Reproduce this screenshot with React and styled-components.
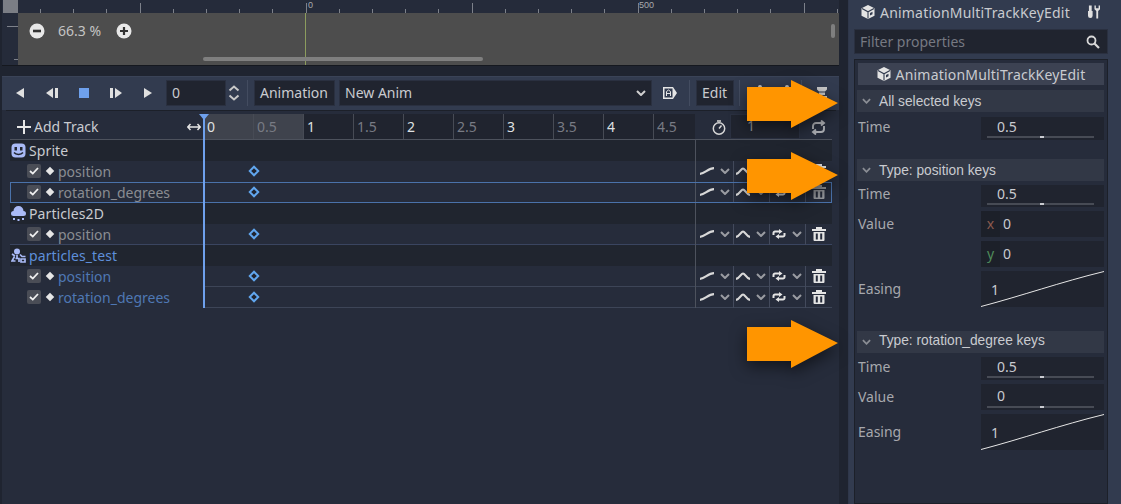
import React from 'react'
import styled, { createGlobalStyle } from 'styled-components'

const GlobalStyle = createGlobalStyle`
  html, body {
    margin: 0;
    padding: 0;
    background: #1f2430;
  }
  * {
    box-sizing: border-box;
  }
`

const Page = styled.div`
  position: relative;
  width: 1121px;
  height: 504px;
  overflow: hidden;
  display: flex;
  background: #1f2430;
  color: #c9cbd0;
  font-family: "Noto Sans", sans-serif;
  font-size: 14px;
`

const LeftColumn = styled.div`
  width: 837px;
  margin-left: 2px;
  display: flex;
  flex-direction: column;
  gap: 10px;
`

const Viewport = styled.div`
  position: relative;
  height: 66px;
  display: grid;
  grid-template-columns: 15px 1fr;
  grid-template-rows: 13px 1fr;
  padding-left: 1px;
  border-bottom: 1px solid #15181f;
  background: #252b3a;
`

const RulerCorner = styled.div`
  background: #7b7e85;
`

const HRuler = styled.div`
  position: relative;
  background: #252b3a;
`

const VRuler = styled.div`
  position: relative;
  background: #252b3a;
`

const Canvas = styled.div`
  background: #4d4d4d;
  display: flex;
  align-items: flex-start;
  padding: 9px 0 0 11px;
  gap: 12px;
  color: #c4c4c4;
`

const Tick = styled.span`
  position: absolute;
  bottom: 0;
  width: 1px;
  left: ${p => p.$x}px;
  height: ${p => (p.$major ? 10 : 4)}px;
  background: #7d818a;
`

const VTick = styled.span`
  position: absolute;
  right: 0;
  height: 1px;
  width: ${p => p.$w}px;
  top: ${p => p.$y}px;
  background: #7d818a;
`

const RulerLabel = styled.span`
  position: absolute;
  top: 0;
  left: ${p => p.$x}px;
  font-family: "Liberation Sans", sans-serif;
  font-size: 9px;
  line-height: 11px;
  color: #a7a9ae;
`

const ZoomButton = styled.svg`
  width: 16px;
  height: 16px;
  flex: none;
  margin-top: 1px;
`

const ZoomText = styled.span`
  width: 46px;
  margin-left: 1px;
  line-height: 18px;
  font-size: 14px;
`

const OriginLine = styled.span`
  position: absolute;
  left: 303px;
  top: 13px;
  bottom: 0;
  width: 1px;
  background: #8c9c5e;
`

const HScroll = styled.span`
  position: absolute;
  left: 201px;
  top: 57px;
  width: 280px;
  height: 4px;
  border-radius: 2px;
  background: #7f7f7f;
`

const VScroll = styled.span`
  position: absolute;
  left: 829px;
  top: 24px;
  width: 4px;
  height: 14px;
  border-radius: 2px;
  background: #7f7f7f;
`

const AnimPanel = styled.div`
  flex: 1;
  background: #262c3b;
  border-top: 1px solid #3a4357;
  display: flex;
  flex-direction: column;
`

const Toolbar = styled.div`
  height: 33px;
  padding-top: 3px;
  display: flex;
  align-items: flex-start;
  background: #323b4f;
`

const ToolIcon = styled.svg`
  width: 16px;
  height: 16px;
  margin: 5px 0 0 ${p => p.$ml || 0}px;
  flex: none;
`

const Field = styled.div`
  height: 26px;
  display: flex;
  align-items: center;
  flex: none;
  width: ${p => p.$w}px;
  margin-left: ${p => p.$ml || 0}px;
  padding: 0 5px;
  background: #20242f;
  border: 1px solid #2a3040;
  color: #c9cbd0;
  line-height: 24px;
`

const ToolSep = styled.span`
  width: 1px;
  height: 26px;
  flex: none;
  margin: 0 6px 0 ${p => p.$ml || 6}px;
  background: #434c60;
`

const TrackEditor = styled.div`
  position: relative;
  margin: 0 3px 0 4px;
  flex: 1;
  background: #262c3b;
  border-top: 1px solid #1c2029;
  padding-top: 3px;
`

const HeaderRow = styled.div`
  height: 26px;
  display: flex;
  border-bottom: 1px solid #4d525d;
  margin: 0 4px;
`

const AddTrack = styled.div`
  width: 194px;
  padding: 0 3px 0 7px;
  display: flex;
  align-items: center;
  gap: 3px;
  color: #c9cbd0;
`

const Timeline = styled.div`
  width: 491px;
  display: flex;
  background: #20242f;
`

const TimeCell = styled.div`
  width: ${p => p.$w}px;
  flex: none;
  padding-left: 3px;
  line-height: 25px;
  border-left: ${p => (p.$first ? 'none' : '1px solid #474b55')};
  color: ${p => (p.$major ? '#dfe0e2' : '#787b84')};
  background: ${p => (p.$active ? '#3f434d' : 'transparent')};
  font-size: 14px;
`

const HeaderActions = styled.div`
  width: 137px;
  display: flex;
  align-items: flex-start;
  position: relative;
`

const LengthField = styled.div`
  position: absolute;
  left: 35px;
  top: 0;
  width: 70px;
  height: 25px;
  background: #20242f;
  border: 1px solid #2a3040;
  padding-left: 16px;
  line-height: 22px;
  color: #8e9096;
`

const Row = styled.div`
  height: 21px;
  display: flex;
  align-items: center;
  position: relative;
  background: ${p => (p.$group ? '#20252f' : 'transparent')};
  margin: 0 4px;
  box-shadow: ${p => (p.$line === 'full' ? 'inset 0 -1px 0 #3a4560' : 'none')};
`

const SelectedOutline = styled.span`
  position: absolute;
  left: 0;
  right: 0;
  top: 0;
  bottom: 0;
  border: 1px solid #4a72aa;
  pointer-events: none;
`

const NameCell = styled.div`
  width: 194px;
  height: 100%;
  flex: none;
  display: flex;
  align-items: center;
  padding: 0 0 1px ${p => (p.$group ? 1 : 17)}px;
  gap: ${p => (p.$group ? 3 : 0)}px;
  white-space: nowrap;
`

const TrackLabel = styled.span`
  color: ${p => (p.$scene ? '#4f78b4' : '#8a8c92')};
`

const GroupLabel = styled.span`
  letter-spacing: 0.1px;
  color: ${p => (p.$scene ? '#5e8fda' : '#c9cbd0')};
`

const CheckBox = styled.span`
  width: 14px;
  height: 14px;
  margin-right: 3px;
  display: flex;
  align-items: center;
  justify-content: center;
  background: #4a4d56;
  border-radius: 2px;
  flex: none;
`

const SmallDiamond = styled.span`
  width: 6px;
  height: 6px;
  margin: 0 5px 0 3px;
  flex: none;
  background: #e6e6e6;
  transform: rotate(45deg);
`

const KeyLane = styled.div`
  position: relative;
  width: 492px;
  height: 100%;
  flex: none;
  border-right: 1px solid #4d525d;
  box-shadow: ${p => (p.$line ? 'inset 0 -1px 0 #3d4557' : 'none')};
`

const Key = styled.span`
  position: absolute;
  left: 46px;
  top: 6px;
  width: 8px;
  height: 8px;
  transform: rotate(45deg);
  background: #20242f;
  border: 2px solid #61a6ee;
`

const ActionCell = styled.div`
  width: 136px;
  display: flex;
  height: 100%;
  flex: none;
  box-shadow: ${p => (p.$line ? 'inset 0 -1px 0 #3d4557' : 'none')};
`

const Action = styled.div`
  width: ${p => p.$w}px;
  height: 100%;
  display: flex;
  align-items: center;
  justify-content: space-between;
  padding: 0 3px 1px ${p => p.$pl}px;
  border-left: ${p => (p.$bar ? '1px solid #434a5c' : 'none')};
`

const Playhead = styled.span`
  position: absolute;
  left: 197px;
  top: 3px;
  height: 194px;
  width: 2px;
  background: #6ea0ec;
`

const PlayheadTop = styled.svg`
  position: absolute;
  left: 193px;
  top: 3px;
  width: 10px;
  height: 6px;
`

const Inspector = styled.div`
  width: 273px;
  margin-left: 9px;
  padding: 0 13px 0 5px;
  border-left: 1px solid #2f374a;
  display: flex;
  flex-direction: column;
  background: #323b4f;
`

const InspectorHead = styled.div`
  height: 29px;
  padding: 0 0 5px 7px;
  display: flex;
  align-items: center;
  gap: 5px;
  color: #c9cbd0;
`

const ClassName = styled.span`
  letter-spacing: 0.2px;
`

const HeadGrow = styled.span`
  flex: 1;
`

const FilterBox = styled.div`
  height: 25px;
  display: flex;
  align-items: center;
  justify-content: space-between;
  padding: 0 7px 0 5px;
  background: #20242f;
  border: 1px solid #2a3040;
  color: #767982;
`

const InspectorBody = styled.div`
  flex: 1;
  margin-top: 5px;
  padding: 3px 3px 0 3px;
  background: #262c3b;
  border: 1px solid #1c2029;
`

const ClassButton = styled.div`
  height: 22px;
  display: flex;
  align-items: center;
  justify-content: center;
  gap: 5px;
  background: #3c4252;
  color: #c9cbd0;
`

const Section = styled.div`
  margin-top: ${p => p.$mt}px;
`

const SectionHead = styled.div`
  height: 22px;
  margin-left: -1px;
  display: flex;
  align-items: center;
  gap: 8px;
  padding-left: 5px;
  background: #323846;
  font-family: "Liberation Sans", sans-serif;
  font-size: 13.75px;
  color: #c9cbd0;
`

const SectionTitle = styled.span`
  margin-bottom: ${p => (p.$lift ? 4 : 0)}px;
`

const Prop = styled.div`
  display: flex;
  margin-top: ${p => p.$mt || 4}px;
`

const PropLabel = styled.div`
  width: 123px;
  flex: none;
  line-height: ${p => p.$lh || 20}px;
  color: #a6a8ad;
`

const PropValue = styled.div`
  flex: 1;
  display: flex;
  flex-direction: column;
  gap: 4px;
`

const SliderBox = styled.div`
  position: relative;
  height: ${p => p.$h}px;
  background: #20242f;
  padding-left: 16px;
  line-height: ${p => (p.$h === 26 ? 24 : p.$h === 22 ? 18 : 20)}px;
  color: #c9cbd0;
`

const SliderTrack = styled.span`
  position: absolute;
  left: 6px;
  right: 10px;
  bottom: 2px;
  height: 2px;
  background: #474b55;
`

const SliderGrabber = styled.span`
  position: absolute;
  left: 53px;
  top: 0;
  width: 4px;
  height: 2px;
  background: #c9cbd0;
`

const AxisRow = styled.div`
  display: flex;
  height: 26px;
  background: #20242f;
  line-height: 25px;
  color: #c9cbd0;
`

const AxisTag = styled.span`
  width: 19px;
  margin-right: 3px;
  text-align: center;
  background: #1c2029;
  color: ${p => p.$color};
`

const EasingBox = styled.div`
  position: relative;
  height: 36px;
  background: #20242f;
  padding: 9px 0 0 10px;
  line-height: 20px;
`

const EasingCurve = styled.svg`
  position: absolute;
  left: 0;
  top: 0;
  width: 123px;
  height: 36px;
`

const ArrowMark = styled.svg`
  position: absolute;
  left: 747px;
  top: ${p => p.$y}px;
  width: 91px;
  height: 48px;
  overflow: visible;
  filter: drop-shadow(0 5px 8px rgba(0, 0, 0, 0.55));
`

const ticks = []
for (let i = 0; i < 25; i++) ticks.push(22 + i * 33.2)

const tracks = [
  { group: 'Sprite', icon: 'sprite' },
  { name: 'position' },
  { name: 'rotation_degrees', selected: true },
  { group: 'Particles2D', icon: 'particles' },
  { name: 'position', line: 'full' },
  { group: 'particles_test', icon: 'scene', scene: true },
  { name: 'position', scene: true, line: 'lane' },
  { name: 'rotation_degrees', scene: true, line: 'lane' },
]

const times = ['0', '0.5', '1', '1.5', '2', '2.5', '3', '3.5', '4', '4.5']

function Cube() {
  return (
    <svg width="14" height="14" viewBox="0 0 14 14" style={{ flex: 'none' }}>
      <path d="M7 0 13.500 3.300V10.700L7 14 .5 10.700V3.300Z" fill="#e4e4e4" />
      <path d="M1 3.600 7 6.800 13 3.600M7 6.800V13.500" fill="none" stroke="#323b4f" strokeWidth="1.100" />
      <path d="M9 8V10.500L11.500 9.200V6.700Z" fill="#323b4f" />
    </svg>
  )
}

function Chevron({ color = '#9a9ca2', w = 10 }) {
  return (
    <svg width={w} height="6" viewBox="0 0 10 6" style={{ flex: 'none' }}>
      <path d="M1 1 5 5 9 1" fill="none" stroke={color} strokeWidth="2" />
    </svg>
  )
}

function NodeIcon({ type }) {
  if (type === 'sprite') {
    return (
      <svg width="15" height="15" viewBox="0 0 15 15" style={{ flex: 'none' }}>
        <rect x=".5" y=".5" width="14" height="14" rx="4" fill="#a9baf6" />
        <rect x="3.500" y="4" width="2.500" height="3.500" fill="#20252f" />
        <rect x="9" y="4" width="2.500" height="3.500" fill="#20252f" />
        <path d="M3 9.500C5 12 10 12 12 9.500" fill="none" stroke="#20252f" strokeWidth="1.500" />
      </svg>
    )
  }
  if (type === 'particles') {
    return (
      <svg width="15" height="15" viewBox="0 0 15 15" style={{ flex: 'none' }}>
        <path d="M2.500 10A2.500 2.500 0 0 1 2.500 5 5 5 0 0 1 12.500 5 2.500 2.500 0 0 1 12.500 10Z" fill="#a9baf6" />
        <rect x="2" y="12" width="2" height="2" fill="#a9baf6" />
        <rect x="6.500" y="13" width="2" height="2" fill="#a9baf6" />
        <rect x="11" y="12" width="2" height="2" fill="#a9baf6" />
      </svg>
    )
  }
  return (
    <svg width="15" height="15" viewBox="0 0 15 15" style={{ flex: 'none' }}>
      <circle cx="6" cy="3.500" r="3" fill="#a9baf6" />
      <path d="M1 6 4 8M9 6.500 11 8.500H14.500M6 7V10M3.500 8.500 1 13H4.500M10 11H14V14H10ZM4.500 10.500H8V14" fill="none" stroke="#a9baf6" strokeWidth="1.700" />
    </svg>
  )
}

function Trash({ dim }) {
  const c = dim ? '#9a9ca1' : '#e4e4e4'
  return (
    <svg width="14" height="14" viewBox="0 0 14 14">
      <rect x="0" y="2" width="14" height="2" fill={c} />
      <rect x="4" y="0" width="6" height="2" fill={c} />
      <path d="M1.500 5H12.500V13A1 1 0 0 1 11.500 14H2.500A1 1 0 0 1 1.500 13ZM3.800 6.500V12.500H5.800V6.500ZM8.200 6.500V12.500H10.200V6.500Z" fill={c} fillRule="evenodd" />
    </svg>
  )
}

function Actions({ dim, line }) {
  return (
    <ActionCell $line={line}>
      <Action $w={37} $pl={4}>
        <svg width="14" height="8" viewBox="0 0 14 8">
          <path d="M0 6.800C5 6.800 8 1.200 14 1.200" fill="none" stroke="#d8d8d8" strokeWidth="2.200" />
        </svg>
        <Chevron />
      </Action>
      <Action $w={36} $bar $pl={2}>
        <svg width="14" height="8" viewBox="0 0 14 8">
          <path d="M0 7C4 6 5 1.500 7 1.500S10 6 14 7" fill="none" stroke="#d8d8d8" strokeWidth="2.200" />
        </svg>
        <Chevron />
      </Action>
      <Action $w={36} $bar $pl={2}>
        <svg width="14" height="10" viewBox="0 0 14 10">
          <path d="M1.500 6V4A1.500 1.500 0 0 1 3 2.500H7M12.500 4V6A1.500 1.500 0 0 1 11 7.500H7" fill="none" stroke="#e4e4e4" strokeWidth="2" />
          <path d="M7 0 10.500 2.500 7 5ZM7 5 3.500 7.500 7 10Z" fill="#e4e4e4" />
        </svg>
        <Chevron />
      </Action>
      <Action $w={27} $bar $pl={6}>
        <Trash dim={dim} />
      </Action>
    </ActionCell>
  )
}

function Slider({ value, h = 23 }) {
  return (
    <SliderBox $h={h}>
      {value}
      <SliderTrack>
        <SliderGrabber />
      </SliderTrack>
    </SliderBox>
  )
}

function Easing() {
  return (
    <EasingBox>
      <EasingCurve viewBox="0 0 123 36">
        <path d="M0 35.500 C40 25 80 11 123 .5" fill="none" stroke="#e6e6e6" strokeWidth="1" />
      </EasingCurve>
      1
    </EasingBox>
  )
}

function Arrow({ y }) {
  return (
    <ArrowMark $y={y} viewBox="0 0 91 48">
      <path d="M0 7H44V0L91 23 44 48V41H0Z" fill="#ff9500" />
    </ArrowMark>
  )
}

export default function App() {
  return (
    <Page>
      <GlobalStyle />
      <LeftColumn>
        <Viewport>
          <RulerCorner />
          <HRuler>
            {ticks.map((x, i) => (
              <Tick key={i} $x={x} $major={i % 5 === 3} />
            ))}
            <RulerLabel $x={290}>0</RulerLabel>
            <RulerLabel $x={621}>500</RulerLabel>
          </HRuler>
          <VRuler>
            <VTick $y={13} $w={11} />
            <VTick $y={46} $w={4} />
          </VRuler>
          <Canvas>
            <ZoomButton viewBox="0 0 16 16">
              <circle cx="8" cy="8" r="7.500" fill="#e8e8e8" />
              <rect x="4" y="6.700" width="8" height="2.600" fill="#333" />
            </ZoomButton>
            <ZoomText>66.3 %</ZoomText>
            <ZoomButton viewBox="0 0 16 16">
              <circle cx="8" cy="8" r="7.500" fill="#e8e8e8" />
              <path d="M4 8H12M8 4V12" stroke="#333" strokeWidth="2.200" />
            </ZoomButton>
          </Canvas>
          <OriginLine />
          <HScroll />
          <VScroll />
        </Viewport>

        <AnimPanel>
          <Toolbar>
            <ToolIcon $ml={10} viewBox="0 0 16 16">
              <path d="M12 3V13L4 8Z" fill="#e0e0e0" />
            </ToolIcon>
            <ToolIcon $ml={16} viewBox="0 0 16 16">
              <path d="M9 3V13L2 8Z" fill="#e0e0e0" />
              <rect x="11" y="3" width="3" height="10" fill="#e0e0e0" />
            </ToolIcon>
            <ToolIcon $ml={16} viewBox="0 0 16 16">
              <rect x="3" y="3" width="10" height="10" fill="#6ea0ec" />
            </ToolIcon>
            <ToolIcon $ml={16} viewBox="0 0 16 16">
              <rect x="2" y="3" width="3" height="10" fill="#e0e0e0" />
              <path d="M7 3V13L14 8Z" fill="#e0e0e0" />
            </ToolIcon>
            <ToolIcon $ml={16} viewBox="0 0 16 16">
              <path d="M4 3V13L12 8Z" fill="#e0e0e0" />
            </ToolIcon>
            <Field $w={60} $ml={10}>0</Field>
            <ToolIcon viewBox="0 0 16 16">
              <path d="M3.500 5.500 8 1.500 12.500 5.500M3.500 10.500 8 14.500 12.500 10.500" fill="none" stroke="#c8c8c8" strokeWidth="2" />
            </ToolIcon>
            <ToolSep $ml={5} />
            <Field $w={81}>Animation</Field>
            <Field $w={313} $ml={4}>
              New Anim
              <HeadGrow />
              <Chevron color="#d0d0d0" />
            </Field>
            <ToolIcon $ml={10} viewBox="0 0 16 16">
              <path d="M1 2H11L15 8 11 14H1Z" fill="#e6e6e6" />
              <rect x="2.500" y="3.500" width="8" height="9" fill="#323b4f" />
              <path d="M4.500 11V6.500L6.500 5 8.500 6.500V11M4.500 8.500H8.500" fill="none" stroke="#e6e6e6" strokeWidth="1" />
            </ToolIcon>
            <ToolSep $ml={11} />
            <Field $w={38}>Edit</Field>
            <ToolSep $ml={5} />
            <ToolIcon $ml={6} viewBox="0 0 16 16">
              <circle cx="8" cy="2" r="2" fill="#c8c8c8" />
            </ToolIcon>
            <ToolIcon $ml={11} viewBox="0 0 16 16">
              <circle cx="8" cy="2" r="2" fill="#c8c8c8" />
            </ToolIcon>
            <ToolSep $ml={6} />
            <ToolIcon $ml={6} viewBox="0 0 16 16">
              <path d="M3 2H13V4.500L11 6.500H5L3 4.500ZM5 7.500H11V10H5ZM3 11H13V13H3Z" fill="#c8c8c8" />
            </ToolIcon>
          </Toolbar>

          <TrackEditor>
            <HeaderRow>
              <AddTrack>
                <svg width="14" height="14" viewBox="0 0 14 14">
                  <path d="M7 0V14M0 7H14" stroke="#e6e6e6" strokeWidth="2" />
                </svg>
                Add Track
                <HeadGrow />
                <svg width="14" height="8" viewBox="0 0 14 8">
                  <path d="M1 4H13M3.500 1 .8 4 3.500 7M10.500 1 13.200 4 10.500 7" fill="none" stroke="#e6e6e6" strokeWidth="1.400" />
                </svg>
              </AddTrack>
              <Timeline>
                {times.map((t, i) => (
                  <TimeCell key={t} $first={i === 0} $major={i % 2 === 0} $active={i < 2} $w={i === 0 ? 49 : i === 9 ? 42 : 50}>
                    {t}
                  </TimeCell>
                ))}
              </Timeline>
              <HeaderActions>
                <svg width="14" height="15" viewBox="0 0 14 15" style={{ margin: '6px 0 0 17px' }}>
                  <circle cx="7" cy="8.500" r="5.700" fill="none" stroke="#d8d8d8" strokeWidth="1.500" />
                  <path d="M7 8.500 9.500 5.500M5 1H9" stroke="#d8d8d8" strokeWidth="1.500" />
                </svg>
                <LengthField>1</LengthField>
                <svg width="15" height="15" viewBox="0 0 15 15" style={{ position: 'absolute', left: 116, top: 6 }}>
                  <path d="M2 9V6A3 3 0 0 1 5 3H12M10 .5 13 3 10 5.500M13 6V9A3 3 0 0 1 10 12H3M5 9.500 2 12 5 14.500" fill="none" stroke="#a9abb0" strokeWidth="1.900" />
                </svg>
              </HeaderActions>
            </HeaderRow>

            {tracks.map((t, i) =>
              t.group ? (
                <Row key={i} $group>
                  <NameCell $group>
                    <NodeIcon type={t.icon} />
                    <GroupLabel $scene={t.scene}>{t.group}</GroupLabel>
                  </NameCell>
                  <KeyLane />
                </Row>
              ) : (
                <Row key={i} $line={t.line}>
                  <NameCell>
                    <CheckBox>
                      <svg width="10" height="8" viewBox="0 0 10 8">
                        <path d="M1 4 3.800 6.600 9 1" fill="none" stroke="#f0f0f0" strokeWidth="1.800" />
                      </svg>
                    </CheckBox>
                    <SmallDiamond />
                    <TrackLabel $scene={t.scene}>{t.name}</TrackLabel>
                  </NameCell>
                  <KeyLane $line={t.line === 'lane'}>
                    <Key />
                  </KeyLane>
                  <Actions dim={t.selected} line={t.line === 'lane'} />
                  {t.selected && <SelectedOutline />}
                </Row>
              ),
            )}
            <Playhead />
            <PlayheadTop viewBox="0 0 10 6">
              <path d="M0 0H10L5 6Z" fill="#6ea0ec" />
            </PlayheadTop>
          </TrackEditor>
        </AnimPanel>
      </LeftColumn>

      <Inspector>
        <InspectorHead>
          <Cube />
          <ClassName>AnimationMultiTrackKeyEdit</ClassName>
          <HeadGrow />
          <svg width="12" height="14" viewBox="0 0 13 14" style={{ marginRight: 8 }}>
            <path d="M1 0H4V6H5V11A2.500 2.500 0 0 1 0 11V6H1Z" fill="#e0e0e0" />
            <path d="M7 0V4L9 6V14H11V6L13 4V0H11.500V3H8.500V0Z" fill="#e0e0e0" />
          </svg>
        </InspectorHead>
        <FilterBox>
          Filter properties
          <svg width="14" height="14" viewBox="0 0 14 14">
            <circle cx="5.500" cy="5.500" r="4" fill="none" stroke="#d8d8d8" strokeWidth="1.800" />
            <path d="M8.500 8.500 13 13" stroke="#d8d8d8" strokeWidth="2.200" />
          </svg>
        </FilterBox>
        <InspectorBody>
          <ClassButton>
            <Cube />
            <ClassName>AnimationMultiTrackKeyEdit</ClassName>
          </ClassButton>
          <Section $mt={5}>
            <SectionHead>
              <Chevron color="#8a8d94" w={9} />
              <SectionTitle>All selected keys</SectionTitle>
            </SectionHead>
            <Prop $mt={5}>
              <PropLabel>Time</PropLabel>
              <PropValue>
                <Slider value="0.5" />
              </PropValue>
            </Prop>
          </Section>
          <Section $mt={19}>
            <SectionHead>
              <Chevron color="#8a8d94" w={9} />
              <SectionTitle>Type: position keys</SectionTitle>
            </SectionHead>
            <Prop>
              <PropLabel $lh={18}>Time</PropLabel>
              <PropValue>
                <Slider value="0.5" h={22} />
              </PropValue>
            </Prop>
            <Prop>
              <PropLabel $lh={26}>Value</PropLabel>
              <PropValue>
                <AxisRow>
                  <AxisTag $color="#8b5a4e">x</AxisTag>0
                </AxisRow>
                <AxisRow>
                  <AxisTag $color="#4f8a5a">y</AxisTag>0
                </AxisRow>
              </PropValue>
            </Prop>
            <Prop>
              <PropLabel $lh={36}>Easing</PropLabel>
              <PropValue>
                <Easing />
              </PropValue>
            </Prop>
          </Section>
          <Section $mt={24}>
            <SectionHead>
              <Chevron color="#8a8d94" w={9} />
              <SectionTitle $lift>Type: rotation_degree keys</SectionTitle>
            </SectionHead>
            <Prop>
              <PropLabel>Time</PropLabel>
              <PropValue>
                <Slider value="0.5" />
              </PropValue>
            </Prop>
            <Prop>
              <PropLabel $lh={26}>Value</PropLabel>
              <PropValue>
                <Slider value="0" h={26} />
              </PropValue>
            </Prop>
            <Prop>
              <PropLabel $lh={36}>Easing</PropLabel>
              <PropValue>
                <Easing />
              </PropValue>
            </Prop>
          </Section>
        </InspectorBody>
      </Inspector>

      <Arrow y={80} />
      <Arrow y={152} />
      <Arrow y={320} />
    </Page>
  )
}
